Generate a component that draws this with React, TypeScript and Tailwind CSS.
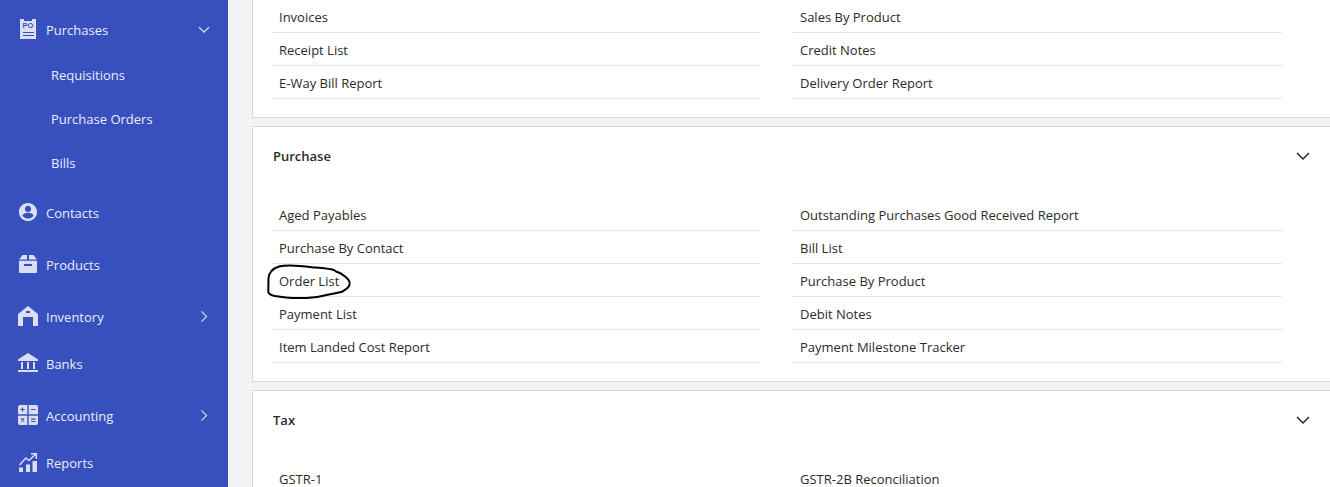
import React from 'react';
import clsx from 'clsx';

type IconProps = { className?: string };

const PurchaseIcon: React.FC<IconProps> = ({ className }) => (
  <svg viewBox="0 0 20 20" className={className} fill="currentColor" aria-hidden="true">
    <path fillRule="evenodd" d="M2 0h4v2h8V0h4v20H2zM5 13h11v1H5zM5 16h11v1H5z" />
    <text x="10" y="9" fontSize="7.5" fontWeight="700" textAnchor="middle" fill="#3850bd" className="font-['Liberation_Sans',sans-serif]">
      PO
    </text>
  </svg>
);

const ContactIcon: React.FC<IconProps> = ({ className }) => (
  <svg viewBox="1 1 22 22" className={className} fill="currentColor" aria-hidden="true">
    <path d="M12 2C6.48 2 2 6.48 2 12s4.48 10 10 10 10-4.48 10-10S17.52 2 12 2zm0 3.2c1.9 0 3.4 1.5 3.4 3.4S13.9 12 12 12s-3.4-1.5-3.4-3.4S10.1 5.2 12 5.2zm0 14c-2.5 0-4.7-1.3-6-3.2 0-2 4-3.1 6-3.1s6 1.1 6 3.1c-1.3 1.9-3.5 3.2-6 3.2z" />
  </svg>
);

const ProductIcon: React.FC<IconProps> = ({ className }) => (
  <svg viewBox="0 0 20 20" className={className} fill="currentColor" aria-hidden="true">
    <path d="M4.5 1H9v4.5H1.2zM11 1h4.500l3.300 4.500H11z" />
    <path fillRule="evenodd" d="M1 6.700h18V18a1 1 0 0 1-1 1H2a1 1 0 0 1-1-1zM6 10v2h8v-2z" />
  </svg>
);

const InventoryIcon: React.FC<IconProps> = ({ className }) => (
  <svg viewBox="0 0 20 20" className={className} fill="currentColor" aria-hidden="true">
    <path fillRule="evenodd" d="M10 0l10 8v12h-5v-9H5v9H0V8zM8 5v2h4V5z" />
  </svg>
);

const BankIcon: React.FC<IconProps> = ({ className }) => (
  <svg viewBox="0 0 20 20" className={className} fill="currentColor" aria-hidden="true">
    <path d="M10 0l10 6.500V8H0V6.500zM3 9h2v7H3zM9 9h2v7H9zM15 9h2v7h-2zM0 17h20v2H0z" />
  </svg>
);

const AccountingIcon: React.FC<IconProps> = ({ className }) => (
  <svg viewBox="0 0 20 20" className={className} aria-hidden="true">
    <path fill="currentColor" d="M2 0h7.300v9.300H0V2a2 2 0 0 1 2-2zM10.700 0H18a2 2 0 0 1 2 2v7.300h-9.300zM0 10.700h9.300V20H2a2 2 0 0 1-2-2zM10.700 10.700H20V18a2 2 0 0 1-2 2h-7.300z" />
    <path stroke="#3850bd" strokeWidth="1.2" d="M2.500 4.500h4M4.500 2.500v4M13 4.500h4.500M3.200 13.500l3 3M6.200 13.500l-3 3M13 14.200h4.500M13 16.500h4.500" />
  </svg>
);

const ReportIcon: React.FC<IconProps> = ({ className }) => (
  <svg viewBox="0 0 20 20" className={className} aria-hidden="true">
    <path fill="currentColor" d="M1 15.500h4V20H1zM8 12.500h4V20H8zM14.500 9H19v11h-4.500z" />
    <path fill="none" stroke="currentColor" strokeWidth="1.500" d="M1.500 13L8 6l3 2.500L17.800 2M13 1.700h5.300V7" />
  </svg>
);

const Chevron: React.FC<IconProps> = ({ className }) => (
  <svg viewBox="0 0 14 8" className={className} fill="none" stroke="currentColor" strokeWidth="1.500" aria-hidden="true">
    <path d="M1 1l6 6 6-6" />
  </svg>
);

interface NavItem {
  label: string;
  icon: React.FC<IconProps>;
  spacing: string;
  arrow?: 'down' | 'right';
  children?: string[];
}

const navItems: NavItem[] = [
  { label: 'Purchases', icon: PurchaseIcon, spacing: 'mt-[9px]', arrow: 'down', children: ['Requisitions', 'Purchase Orders', 'Bills'] },
  { label: 'Contacts', icon: ContactIcon, spacing: 'mt-[7px]' },
  { label: 'Products', icon: ProductIcon, spacing: 'mt-2.5' },
  { label: 'Inventory', icon: InventoryIcon, spacing: 'mt-2.5', arrow: 'right' },
  { label: 'Banks', icon: BankIcon, spacing: 'mt-[5px]' },
  { label: 'Accounting', icon: AccountingIcon, spacing: 'mt-2.5', arrow: 'right' },
  { label: 'Reports', icon: ReportIcon, spacing: 'mt-[5px]' },
];

const salesReports = ['Invoices', 'Sales By Product', 'Receipt List', 'Credit Notes', 'E-Way Bill Report', 'Delivery Order Report'];

const purchaseReports = [
  'Aged Payables',
  'Outstanding Purchases Good Received Report',
  'Purchase By Contact',
  'Bill List',
  'Order List',
  'Purchase By Product',
  'Payment List',
  'Debit Notes',
  'Item Landed Cost Report',
  'Payment Milestone Tracker',
];

const taxReports = ['GSTR-1', 'GSTR-2B Reconciliation'];

const Sidebar: React.FC = () => (
  <nav className="w-[228px] shrink-0 overflow-hidden bg-[#3850bd] text-[#e9ecf8]">
    <ul>
      {navItems.map(({ label, icon: Icon, spacing, arrow, children }) => (
        <li key={label} className={spacing}>
          <button type="button" className="flex h-[42px] w-full items-center pr-[18px] pl-[18px] text-left">
            <Icon className="mr-2 mb-0.5 size-5 text-[#d9def3]" />
            <span className="flex-1">{label}</span>
            {arrow && <Chevron className={clsx('mb-0.5 h-[7px] w-3 text-[#cdd4ef]', arrow === 'right' && '-rotate-90')} />}
          </button>
          {children && (
            <ul className="pt-0.5">
              {children.map((child) => (
                <li key={child}>
                  <a href="#" className="flex h-11 items-center pl-[51px]">
                    {child}
                  </a>
                </li>
              ))}
            </ul>
          )}
        </li>
      ))}
    </ul>
  </nav>
);

// Hand-drawn ring around a report name
const Ring: React.FC = () => (
  <svg
    viewBox="0 0 86 38"
    className="pointer-events-none absolute -top-0.5 -left-[5px] h-[38px] w-[86px]"
    fill="none"
    stroke="#000"
    strokeWidth="2"
    strokeLinecap="round"
    strokeLinejoin="round"
    aria-hidden="true"
  >
    <path d="M13 4.500C7 6.500 3 11 2.500 16L2.300 30C3 33 5.500 33.200 9 34C22 36.500 43 37 56 34C64 32.500 69 31.500 76 29.800C79 28 83 25.500 83.500 23C84.300 19 82.500 17.500 79 14.500C76 12 74 10.500 70 9.500L68 8C62 6.200 53 5.800 46 5.200C36 4 22 2.500 13 4.500Z" />
  </svg>
);

interface ReportCardProps {
  title?: string;
  reports: string[];
  circled?: string;
}

const ReportCard: React.FC<ReportCardProps> = ({ title, reports, circled }) => (
  <section className={clsx('shrink-0 border-b border-l border-[#d9d9dc] bg-white pb-[18px]', title && 'border-t')}>
    {title && (
      <button type="button" className="mb-[13px] flex h-[58px] w-full items-center justify-between px-5 text-left">
        <h2 className="font-semibold">{title}</h2>
        <Chevron className="h-2 w-3.5" />
      </button>
    )}
    <ul className="grid grid-cols-2 gap-x-[31px] pr-12 pl-[18px]">
      {reports.map((report) => (
        <li key={report} className="relative border-b border-[#e5e6e9]">
          <a href="#" className="flex h-8 items-center px-2 pt-0.5">
            {report}
          </a>
          {report === circled && <Ring />}
        </li>
      ))}
    </ul>
  </section>
);

const App: React.FC = () => (
  <div className="flex h-screen overflow-hidden bg-[#f3f3f6] font-['Open_Sans','Noto_Sans',sans-serif] text-[13px] leading-5 text-[#2b2b2b]">
    <Sidebar />
    <main className="flex min-w-0 flex-1 flex-col gap-2 overflow-hidden pl-6">
      <ReportCard reports={salesReports} />
      <ReportCard title="Purchase" reports={purchaseReports} circled="Order List" />
      <ReportCard title="Tax" reports={taxReports} />
    </main>
  </div>
);

export default App;
